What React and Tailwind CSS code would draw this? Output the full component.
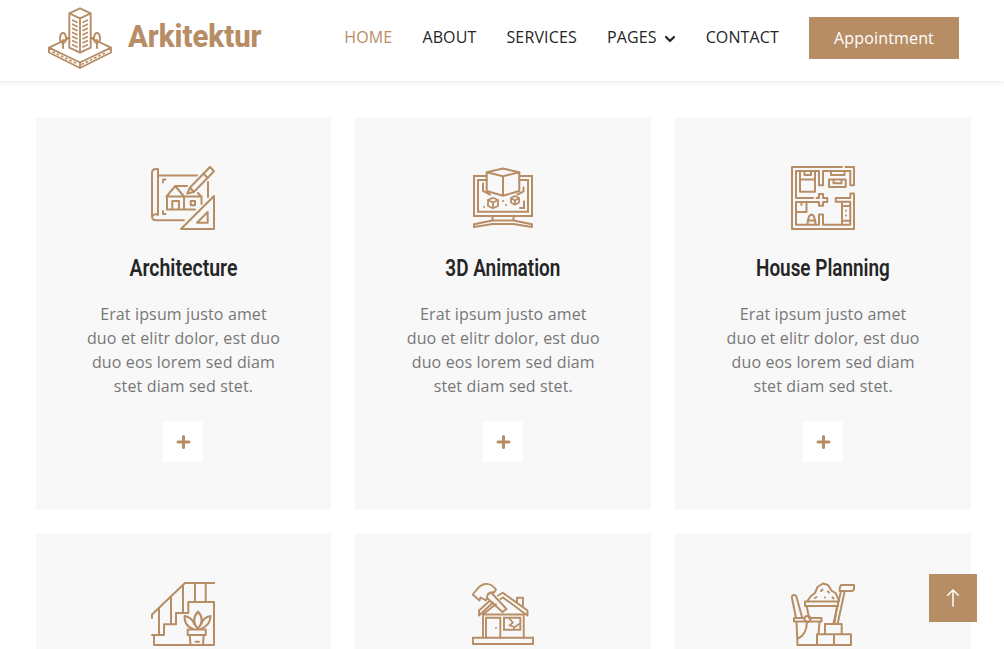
import React from "react";

function Icon({ children, className = "" }) {
  return (
    <svg
      viewBox="0 0 64 64"
      className={`size-16 shrink-0 text-[#b78d65] ${className}`}
      fill="none"
      stroke="currentColor"
      strokeWidth="2"
      strokeLinecap="round"
      strokeLinejoin="round"
    >
      {children}
    </svg>
  );
}

const floors = [0, 1, 2, 3, 4, 5, 6];

function LogoIcon() {
  return (
    <Icon>
      <g strokeWidth="1.9">
        <path d="M32 2.3 21.3 7.3V41.7L32 46.7 42.7 41.7V7.3ZM21.3 7.3 32 12.3 42.7 7.3M32 12.3V46.7" />
        <path d="M21.3 32 1 41.7V46.5L32 62 63 46.5V41.7L42.7 32M1 41.7 32 56.5 63 41.7M32 56.5V62" />
        <path d="M15 42V34M49 42V34M15 37C10 37 12 27 15 27S20 37 15 37M49 37C44 37 46 27 49 27S54 37 49 37M18.500 32H21M43 32H45.500" />
        <path strokeDasharray="1.5 3.200" strokeWidth="1.6" d="M5 46 30 58.300M34 58.300 59 46" />
      </g>
      <g strokeWidth="1.700" strokeLinecap="butt">
        {floors.map((n) => (
          <path key={n} d={`M24 ${14 + n * 4.1}l5.600 2.600M34.400 ${16.6 + n * 4.1}l5.600-2.600`} />
        ))}
      </g>
    </Icon>
  );
}

function BlueprintIcon() {
  return (
    <Icon>
      <path d="M7 49V3H5Q1 3 1 7V50Q1 54.300 5 54.300H33M1 51Q2 48 7 48M8 9.500H46M57 16V31" />
      <path d="M12 16.500V13.500H14.500M12 45V48H14.500" strokeWidth="1.800" />
      <path d="M15.500 30.500 24.300 20 33 30.500V43.500M24.300 20H36M47 27 50.500 31V38M16 30.500H50.500M16 30.500V43.500H44M21.300 43V35H28V43M39.700 35H44V39.300H39.700Z" />
      <path d="M36.300 27.500 39 21.500 59 1 63 5.300 42.800 26ZM39 21.500 42.800 26M52.300 7.500 56.800 12" />
      <path d="M63 30V63H30ZM56.700 46V56.700H46Z" />
    </Icon>
  );
}

function MonitorCubeIcon() {
  return (
    <Icon>
      <path d="M32 2.500 15.700 6.300V25L32 29.700 48.300 25V6.300ZM15.700 6.300 32 10.200 48.300 6.300M32 10.200V29.700" />
      <path d="M15.700 10H3V50H61V10H48.300M15.700 14H7V45.700H57V14H48.300" strokeLinejoin="miter" />
      <path d="M12 17.500V25L19 28.500M52.500 21.500V25.500L46.500 28.500M53 35.500V42H49" strokeLinejoin="miter" />
      <path d="M22 31.800 17 34V40L22 42.200 27 40V34ZM17 34 22 36.500 27 34M22 36.500V42M44 30 40 32V36.500L44 38.700 48 36.500V32ZM40 32 44 34.500 48 32M44 34.500V38.500" strokeWidth="1.800" />
      <path d="M13 41h.01M32 35h.01M35 39h.01" />
      <path d="M21.500 50V54.500M42.500 50V54.500M3 61V58.300L21.500 54.500H42.500L61 58.300V61L42.500 58H21.500Z" />
    </Icon>
  );
}

function FloorPlanIcon() {
  return (
    <Icon>
      <path d="M51 1H1V63H63V27.500H59.300V32H44.700V35.700H59.300V58.700H32V48.500H28V58.700H5V36H28V39.700H32V36H36.300V32H32V28H28V32H25.500M22 32H5V5H28V19.300H32V5H59.300V19.300H63V1H54.500" />
      <path d="M9 5V25.700H24V5M9 13.500H24M13.500 5V9H20V5M40 5V9H53.500V5M38 13.500H54.700V21H38ZM42.500 14V17.300H50.500V14" />
      <path d="M5 46H15.500V36M10.500 36V39M51 36V58.500M51 40H59M51 54.700H59M16.500 58.500C17 45 24 45 24.500 58.500M17 54.500H24M20.500 48.500V49" />
      <path d="M55 44.700h.01M55 49.500h.01" />
    </Icon>
  );
}

function StairsIcon() {
  return (
    <Icon>
      <path d="M1 36V32.500L34 1H63.500M8 26.500V53M20 15V42M32 3V31M44 1V20M54.700 1V20" />
      <path d="M1 53H13V42.300H25V31H37.300V20H63V63H3V53" />
      <path d="M36.700 47.500H54.700V53H36.700ZM38.700 53 39.500 63M52.700 53 52 63M44.500 59.700H48" />
      <path d="M46.700 47C41 40 43 34 47 29.500C51 34 53 40 46.700 47ZM42 47C35 44 33.500 40 33.500 34C39 35 42 38 43 42M50 47C57 44 59.500 40 59.500 34C54 35 51.500 38 50.500 42" />
    </Icon>
  );
}

function RepairIcon() {
  return (
    <Icon>
      <path d="M2 55.800H62V62H2ZM12 32.500V55.500M52.700 32.500V55.500M12 32.500H52.700M15 55.500V35.700H29.300V55.500M33 35.700H49.300V47.700H33ZM25 45.700h.01" strokeLinejoin="miter" strokeWidth="1.900" />
      <path d="M38.500 37 42 40.500 38.500 43.500 43.500 45 42.500 47.500M43.500 45 49 41.500" strokeWidth="1.700" />
      <path d="M18 19.500 8 28.500V33.500L22 20.500M27 13.500 31.700 10.700 56.500 28.500V33.500L32 15.500 29.500 17M46 20V15.800H52V25M12 32.500 25 22" strokeWidth="1.900" />
      <path d="M1.700 12.500 5.500 8Q9 3 14 2Q20 1 25 7.500L23 10.500Q19.500 9.500 17 12L15 18.500 9.500 15.500 8.500 18.500ZM17 12.500 20 10.500 35.500 27 31.500 30 16 16" strokeWidth="1.900" />
    </Icon>
  );
}

function MaterialsIcon() {
  return (
    <Icon>
      <path d="M16 19.500 20 14 24 11 26.500 5 32 1.500 37 3 40.500 8.500 45 11.500 48 19M14 19.500H47V24H14ZM15.700 24 18 36M46 24 43.500 41" />
      <path d="M30 9 31.500 7.500M24 16 25.500 15M37 9.500 38 10.500M41.500 15.500 42.500 16.500M34 15.500h.01" />
      <path d="M50 3H63V6.500Q63 9 60 9H48.700V6ZM50 9 42.500 41.500M53.700 9 46.700 41.500" />
      <path d="M34 42H50.700V52.300H34ZM26 52.300H43V63H26ZM43 52.300H60V63H43Z" />
      <path d="M13 36H3V39.500H30.500V36H20M5.500 39.500 6.500 63H26M28.500 39.500 27.500 52M16 40Q15.500 53 7 56.500M5 36 1 16Q.5 13 3 13Q5 13 5.500 15L11 35" />
      <circle cx="16.500" cy="37" r="3" />
    </Icon>
  );
}

const services = [
  { id: "architecture", title: "Architecture", icon: BlueprintIcon, fit: "scale-x-[0.812]" },
  { id: "animation", title: "3D Animation", icon: MonitorCubeIcon, fit: "scale-x-[0.79]" },
  { id: "planning", title: "House Planning", icon: FloorPlanIcon, fit: "scale-x-[0.788]" },
  { id: "stairs", icon: StairsIcon },
  { id: "repair", icon: RepairIcon },
  { id: "materials", icon: MaterialsIcon },
];

function ServiceCard({ title, icon: Glyph, fit }) {
  return (
    <article className="flex h-[392px] flex-col items-center bg-[#f8f8f8] p-12 text-center">
      <Glyph />
      {title && (
        <>
          <h4 className={`mt-[23px] mb-[19px] h-[30px] font-['Roboto',sans-serif] text-[24px] leading-[30px] font-semibold whitespace-nowrap text-[#252525] ${fit}`}>
            {title}
          </h4>
          <p className="w-[199px] text-base leading-6 tracking-[0.14px] text-[#777777]">
            Erat ipsum justo amet duo et elitr dolor, est duo duo eos lorem sed diam stet diam sed stet.
          </p>
          <a href="#" aria-label={title} className="mt-6 flex size-10 items-center justify-center bg-white text-[#b78d65]">
            <svg viewBox="0 0 16 16" className="size-4" fill="none" stroke="currentColor" strokeWidth="3" strokeLinecap="round">
              <path d="M8.500 2.500V13.500M3 8H14" />
            </svg>
          </a>
        </>
      )}
    </article>
  );
}

export default function App() {
  return (
    <div className="h-[649px] overflow-hidden bg-white font-['Open_Sans',sans-serif]">
      <header className="relative flex h-[81px] items-start bg-white pr-[45px] pl-12 shadow-[0_2px_4px_rgba(0,0,0,0.075)]">
        <a href="#" className="flex pt-1.5 text-[#b78d65]">
          <LogoIcon />
          <span className="ml-4 w-[134px] origin-left scale-x-[0.915] font-['Roboto',sans-serif] text-[32px] leading-[60px] font-extrabold whitespace-nowrap">
            Arkitektur
          </span>
        </a>
        <nav className="ml-auto flex gap-[30px] pt-[25px] text-base leading-6 tracking-[0.14px] text-[#252525]">
          <a href="#" className="text-[#b78d65]">HOME</a>
          <a href="#">ABOUT</a>
          <a href="#">SERVICES</a>
          <a href="#" className="flex items-center">
            PAGES
            <svg viewBox="0 0 12 8" className="mt-1 ml-[7px] h-2 w-3" fill="none" stroke="currentColor" strokeWidth="2.200" strokeLinecap="round" strokeLinejoin="round">
              <path d="M2 2 6 6 10 2" />
            </svg>
          </a>
          <a href="#">CONTACT</a>
        </nav>
        <a href="#" className="mt-[17px] ml-[30px] flex h-[42px] w-[150px] items-center justify-center bg-[#b78d65] text-base tracking-[0.16px] text-white">
          Appointment
        </a>
      </header>

      <main className="grid grid-cols-3 gap-6 pt-[37px] pr-[33px] pl-[35.6px]">
        {services.map((service) => (
          <ServiceCard key={service.id} {...service} />
        ))}
      </main>

      <a href="#" aria-label="Back to top" className="fixed right-[27px] bottom-[27px] flex size-12 items-center justify-center bg-[#b78d65] text-white">
        <svg viewBox="0 0 20 20" className="size-5" fill="none" stroke="currentColor" strokeWidth="1.500" strokeLinecap="round" strokeLinejoin="round">
          <path d="M10 18V2M4.700 7.300 10 2 15.300 7.300" />
        </svg>
      </a>
    </div>
  );
}
